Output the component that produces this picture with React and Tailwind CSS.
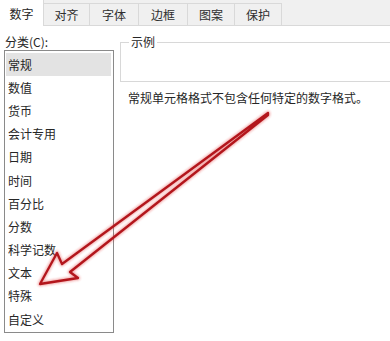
import React from "react";

const tabs = [
  { label: "数字", w: "w-[44px]", active: true },
  { label: "对齐", w: "w-[46px]" },
  { label: "字体", w: "w-[49px]" },
  { label: "边框", w: "w-[49px]" },
  { label: "图案", w: "w-[47px]" },
  { label: "保护", w: "w-[47px]" },
];

const items = ["常规", "数值", "货币", "会计专用", "日期", "时间", "百分比", "分数", "科学记数", "文本", "特殊", "自定义"];

export default function App() {
  return (
    <div
      className="relative w-[390px] h-[341px] overflow-hidden bg-white text-[12px] text-[#262626]"
      style={{ fontFamily: '"Noto Sans CJK SC", "Noto Sans", sans-serif' }}
    >
      {/* tab strip */}
      <div className="flex h-[26px] bg-[#f0f0f0] border-b border-[#d9d9d9]">
        {tabs.map((t) =>
          t.active ? (
            <div
              key={t.label}
              className={`${t.w} h-[26px] -mb-px bg-white border-r border-[#d9d9d9] flex items-center justify-center pt-[2px] leading-[16px]`}
            >
              {t.label}
            </div>
          ) : (
            <div
              key={t.label}
              className={`${t.w} mt-[3px] h-[22px] border-t border-r border-[#d9d9d9] flex items-center justify-center pt-[1px] leading-[16px] text-[#2e2e2e]`}
            >
              {t.label}
            </div>
          )
        )}
      </div>

      <div className="flex">
        {/* left column */}
        <div className="w-[120px] pl-[4px] pt-[8px] flex flex-col">
          <div className="h-[16px] leading-[16px] pl-[1px]">分类(C):</div>
          <div className="w-[110px] h-[283px] border border-[#8a8a8a] pt-[2px] pl-[1px] pr-[2px]">
            {items.map((it, i) => (
              <div
                key={it}
                className={`h-[23.2px] flex items-center pl-[2px] leading-[16px] ${i === 0 ? "bg-[#e3e3e3]" : ""}`}
              >
                {it}
              </div>
            ))}
          </div>
        </div>

        {/* right column */}
        <div className="flex-1 pt-[8px]">
          <fieldset className="h-[48px] border-t border-l border-b border-[#d8d8d8] -mr-[4px]">
            <legend className="ml-[8px] px-[2px] leading-[16px]">示例</legend>
          </fieldset>
          <div className="mt-[8px] pl-[8px] leading-[16px] whitespace-nowrap">
            常规单元格格式不包含任何特定的数字格式。
          </div>
        </div>
      </div>

      {/* red annotation arrow */}
      <svg className="absolute left-0 top-0 pointer-events-none" width="390" height="341" viewBox="0 0 390 341">
        <defs>
          <filter id="glow" x="-10%" y="-10%" width="120%" height="120%">
            <feGaussianBlur stdDeviation="1.3" />
          </filter>
        </defs>
        <polygon
          points="268,113 62,264 57,253 40,284 78,278 70,272 268,115"
          fill="none"
          stroke="rgba(225,50,50,0.4)"
          strokeWidth="4.5"
          strokeLinejoin="round"
          filter="url(#glow)"
        />
        <polygon
          points="268,113 62,264 57,253 40,284 78,278 70,272 268,115"
          fill="none"
          stroke="#b3161c"
          strokeWidth="2.3"
          strokeLinejoin="round"
        />
      </svg>
    </div>
  );
}
